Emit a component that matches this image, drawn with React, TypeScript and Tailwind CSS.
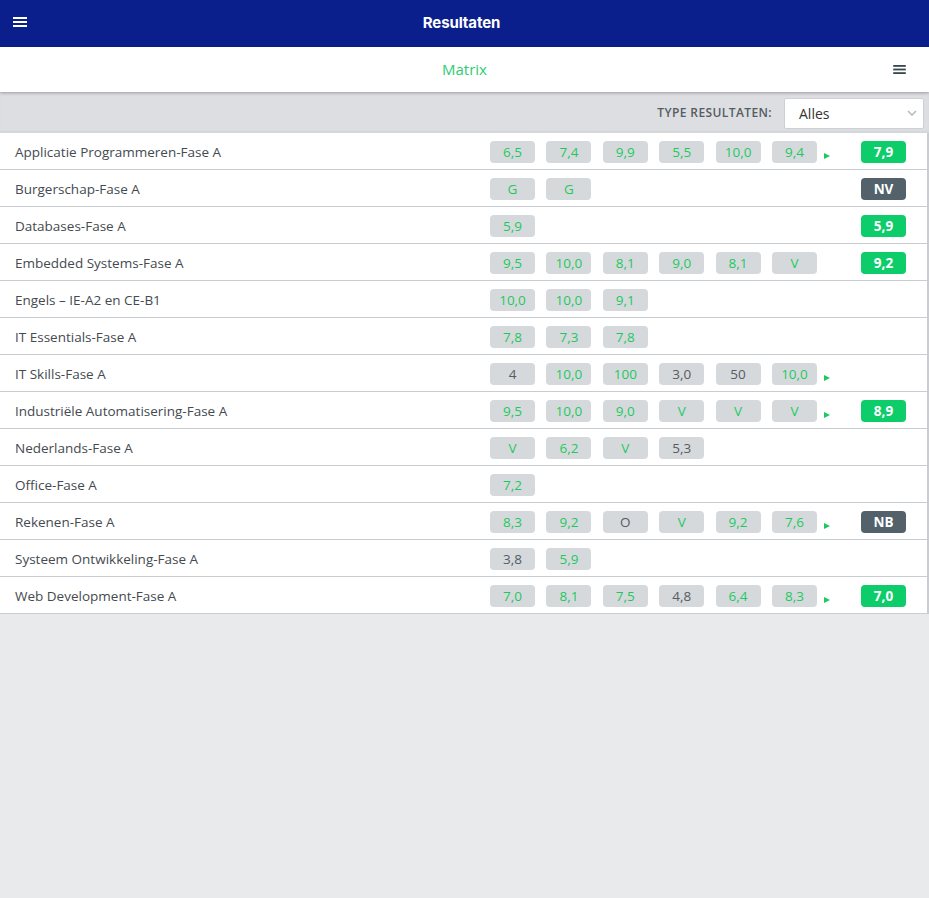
import React from "react";

interface Grade {
  value: string;
  pass?: boolean;
}

interface Course {
  name: string;
  grades: Grade[];
  more?: boolean;
  final?: { value: string; kind: "green" | "dark" };
}

function g(value: string, pass = true): Grade {
  return { value, pass };
}

const courses: Course[] = [
  {
    name: "Applicatie Programmeren-Fase A",
    grades: [g("6,5"), g("7,4"), g("9,9"), g("5,5"), g("10,0"), g("9,4")],
    more: true,
    final: { value: "7,9", kind: "green" },
  },
  {
    name: "Burgerschap-Fase A",
    grades: [g("G"), g("G")],
    final: { value: "NV", kind: "dark" },
  },
  {
    name: "Databases-Fase A",
    grades: [g("5,9")],
    final: { value: "5,9", kind: "green" },
  },
  {
    name: "Embedded Systems-Fase A",
    grades: [g("9,5"), g("10,0"), g("8,1"), g("9,0"), g("8,1"), g("V")],
    final: { value: "9,2", kind: "green" },
  },
  {
    name: "Engels – IE-A2 en CE-B1",
    grades: [g("10,0"), g("10,0"), g("9,1")],
  },
  {
    name: "IT Essentials-Fase A",
    grades: [g("7,8"), g("7,3"), g("7,8")],
  },
  {
    name: "IT Skills-Fase A",
    grades: [g("4", false), g("10,0"), g("100"), g("3,0", false), g("50", false), g("10,0")],
    more: true,
  },
  {
    name: "Industriële Automatisering-Fase A",
    grades: [g("9,5"), g("10,0"), g("9,0"), g("V"), g("V"), g("V")],
    more: true,
    final: { value: "8,9", kind: "green" },
  },
  {
    name: "Nederlands-Fase A",
    grades: [g("V"), g("6,2"), g("V"), g("5,3", false)],
  },
  {
    name: "Office-Fase A",
    grades: [g("7,2")],
  },
  {
    name: "Rekenen-Fase A",
    grades: [g("8,3"), g("9,2"), g("O", false), g("V"), g("9,2"), g("7,6")],
    more: true,
    final: { value: "NB", kind: "dark" },
  },
  {
    name: "Systeem Ontwikkeling-Fase A",
    grades: [g("3,8", false), g("5,9")],
  },
  {
    name: "Web Development-Fase A",
    grades: [g("7,0"), g("8,1"), g("7,5"), g("4,8", false), g("6,4"), g("8,3")],
    more: true,
    final: { value: "7,0", kind: "green" },
  },
];

function MenuIcon({ className }: { className: string }) {
  return (
    <svg viewBox="0 0 14 10" className={className} fill="currentColor">
      <rect x="0" y="0" width="14" height="2" />
      <rect x="0" y="4" width="14" height="2" />
      <rect x="0" y="8" width="14" height="2" />
    </svg>
  );
}

function GradeChip({ grade }: { grade: Grade }) {
  return (
    <div className="w-[56.4px] shrink-0">
      <div
        className={`flex items-center justify-center w-[45px] h-[22px] rounded-[4px] bg-[#d6d9dc] text-[13.5px] ${
          grade.pass ? "text-[#1dc95f]" : "text-[#555c63]"
        }`}
      >
        {grade.value}
      </div>
    </div>
  );
}

function CourseRow({ course }: { course: Course }) {
  return (
    <div className="flex items-center h-[37px] pt-[2px] border-b border-[#c9ccd0] bg-white">
      <div className="w-[490px] pl-[15px] text-[13.5px] text-[#444a50]">{course.name}</div>
      <div className="flex items-center w-[371px] h-full">
        {course.grades.map((grade, i) => (
          <GradeChip key={i} grade={grade} />
        ))}
        {course.more && (
          <div className="self-end mb-[10px] -ml-[4px] w-0 h-0 border-l-[6px] border-l-[#1dc95f] border-y-[3.5px] border-y-transparent"></div>
        )}
      </div>
      {course.final && (
        <div
          className={`flex items-center justify-center w-[45px] h-[22px] rounded-[4px] text-white font-bold text-[13.5px] ${
            course.final.kind === "green" ? "bg-[#0dcc6a]" : "bg-[#53616b]"
          }`}
        >
          {course.final.value}
        </div>
      )}
    </div>
  );
}

export default function App() {
  return (
    <div
      className="min-h-[898px] bg-[#e9eaeb] flex flex-col"
      style={{ fontFamily: '"Open Sans", "Noto Sans", sans-serif' }}
    >
      <header className="relative flex items-center justify-center h-[47px] bg-[#0b1f8c] text-white pr-[6px]">
        <MenuIcon className="absolute left-[13px] top-[17px] w-[14px] h-[10px]" />
        <span
          className="font-bold text-[15px] tracking-[-0.1px]"
          style={{ fontFamily: '"Inter", "Noto Sans", sans-serif' }}
        >
          Resultaten
        </span>
      </header>

      <div className="relative z-10 flex items-center justify-center h-[45px] bg-white shadow-[0_1px_3px_rgba(0,0,0,0.3)]">
        <span className="text-[15px] text-[#2ecc71] font-medium">Matrix</span>
        <MenuIcon className="absolute right-[23px] top-[18px] w-[13px] h-[9px] text-[#37474f]" />
      </div>

      <div className="flex items-center justify-end h-[41px] bg-[#dcdee1] pr-[5px] pt-[1px] shadow-[inset_0_-2px_2px_rgba(0,0,0,0.04)]">
        <span className="text-[12px] font-semibold text-[#555c63] tracking-[0.4px] mr-[12px]">
          TYPE RESULTATEN:
        </span>
        <div className="flex items-center justify-between w-[140px] h-[31px] bg-white border border-[#cdd0d4] rounded-[2px] pl-[14px] pr-[6px]">
          <span className="text-[14px] text-[#333]">Alles</span>
          <svg viewBox="0 0 10 6" className="w-[10px] h-[6px] text-[#b5bac0]" fill="none" stroke="currentColor" strokeWidth="1.6">
            <path d="M1 1l4 4 4-4" />
          </svg>
        </div>
      </div>

      <div className="w-[929px] border-r-2 border-[#c9ccd0]">
        {courses.map((course) => (
          <CourseRow key={course.name} course={course} />
        ))}
      </div>
    </div>
  );
}
